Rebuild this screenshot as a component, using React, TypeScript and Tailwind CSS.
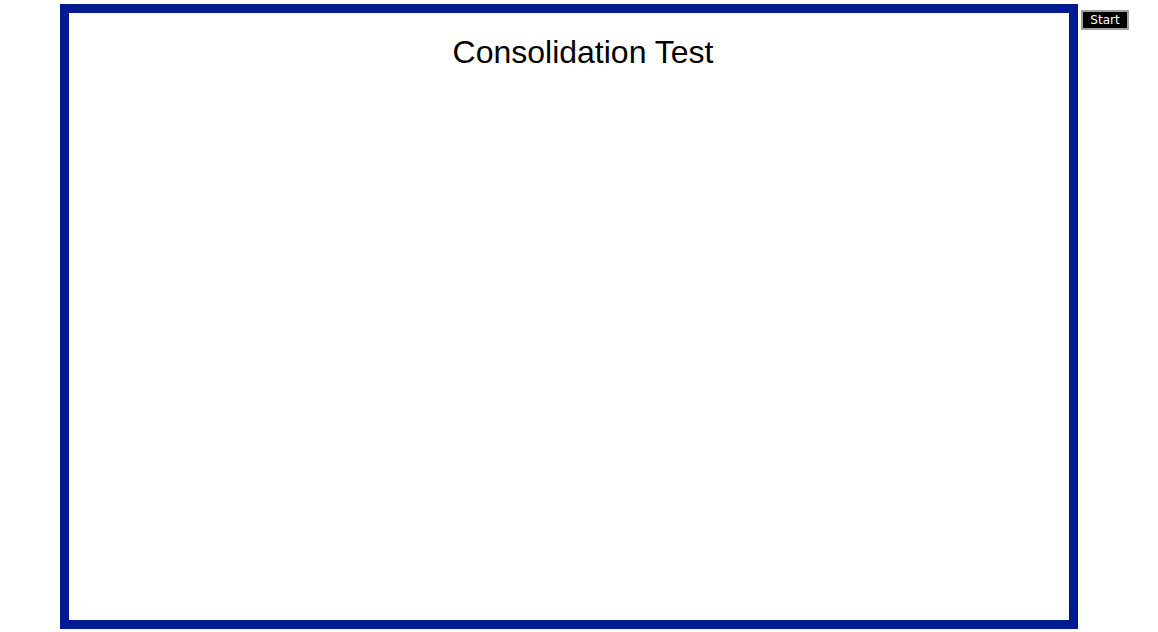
import React from 'react';

export default function App() {
  return (
    <div className="w-[1158px] h-[632px] bg-white flex items-start pl-[60px] pt-[4px] gap-[3px] overflow-hidden">
      <div className="w-[1018px] h-[625px] border-[9px] border-[#001a94] bg-white flex flex-col">
        <h1
          className="mt-[21px] pl-[28px] text-center text-[32px] leading-[37px] text-black"
          style={{ fontFamily: '"Liberation Sans", Arial, sans-serif' }}
        >
          Consolidation Test
        </h1>
      </div>
      <button
        className="mt-[6px] w-[48px] h-[20px] bg-black border-2 border-[#a0a0a0] text-white text-[12px] leading-[16px] flex items-center justify-center"
        style={{ fontFamily: '"DejaVu Sans", Tahoma, sans-serif' }}
      >
        Start
      </button>
    </div>
  );
}
